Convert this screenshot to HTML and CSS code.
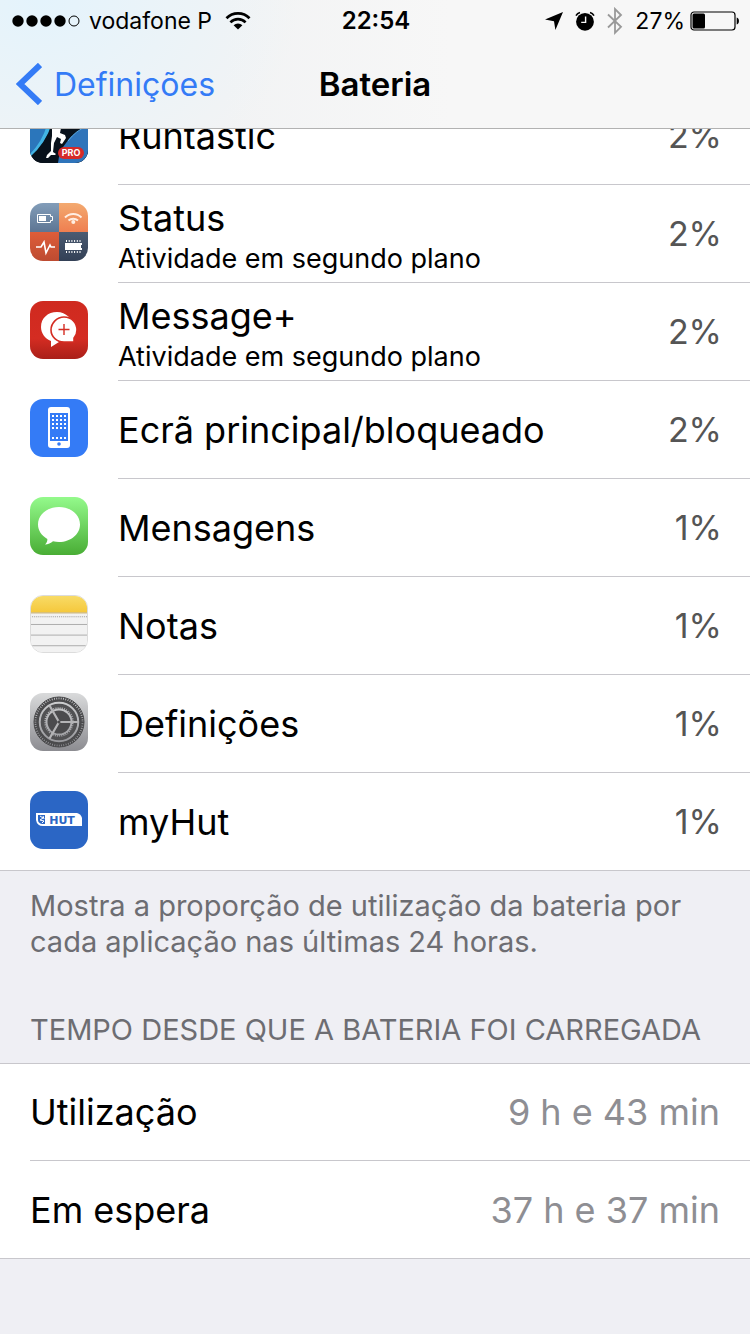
FILE: index.html
```html
<!DOCTYPE html>
<html lang="pt">
<head>
  <meta charset="UTF-8">
  <meta name="viewport" content="width=device-width, initial-scale=1.0">
  <title>Bateria</title>
  <link rel="stylesheet" href="styles.css">
</head>
<body>
  <header class="top">
    <div class="status-bar">
      <div class="status-left">
        <svg width="68" height="12" viewBox="0 0 68 12" aria-label="Rede">
          <circle cx="6" cy="6" r="5.7"/>
          <circle cx="20" cy="6" r="5.7"/>
          <circle cx="34" cy="6" r="5.7"/>
          <circle cx="48" cy="6" r="5.7"/>
          <circle cx="62" cy="6" r="5" fill="none" stroke="#000" stroke-width="1"/>
        </svg>
        <span>vodafone P</span>
        <svg width="26" height="18" viewBox="0 0 26 18" fill="none" stroke="#000" aria-label="Wi-Fi">
          <path d="M1.5 6.2a16.3 16.3 0 0 1 23 0" stroke-width="2.8"/>
          <path d="M5.4 10.3a10.8 10.8 0 0 1 15.2 0" stroke-width="2.6"/>
          <path d="M13 17.6l-4.4-4.3a6.2 6.2 0 0 1 8.8 0z" fill="#000" stroke="none"/>
        </svg>
      </div>
      <time class="clock">22:54</time>
      <div class="status-right">
        <svg width="18" height="18" viewBox="0 0 18 18" aria-label="Localização">
          <path d="M18 0L10.4 18 9 9.2 0 7.6z"/>
        </svg>
        <svg width="20" height="20" viewBox="0 0 20 20" aria-label="Alarme">
          <circle cx="10" cy="10.8" r="8.9"/>
          <path d="M1 4.6A7 7 0 0 1 5 1.4M19 4.6A7 7 0 0 0 15 1.4" fill="none" stroke="#000" stroke-width="1.6"/>
          <path d="M10.6 5.5v5.9H6.2" fill="none" stroke="#f7f7f7" stroke-width="1.4"/>
        </svg>
        <svg width="16" height="28" viewBox="0 0 16 28" aria-label="Bluetooth">
          <path d="M1 7.5l13 12.3-6 6V2l6 6L1 20.5" fill="none" stroke="#999" stroke-width="1.8"/>
        </svg>
        <span class="battery-level">27%</span>
        <svg width="50" height="20" viewBox="0 0 50 20" aria-label="Bateria">
          <rect x="1" y="1" width="44" height="18" rx="3" fill="none" stroke="#000" stroke-width="1.2"/>
          <rect x="2.5" y="2.5" width="12.5" height="15" rx="1.5"/>
          <path d="M46.7 6.5c3 .6 3 6.4 0 7z"/>
        </svg>
      </div>
    </div>
    <nav class="nav-bar">
      <a class="back" href="#">
        <svg width="26" height="42" viewBox="0 0 26 42" aria-hidden="true">
          <path d="M24 2L4 21l20 19" fill="none" stroke="#347bf6" stroke-width="6"/>
        </svg>
        Definições
      </a>
      <h1>Bateria</h1>
    </nav>
  </header>

  <main>
    <ul class="apps">
      <li>
        <svg class="app-icon" viewBox="0 0 58 58" aria-hidden="true">
          <rect width="58" height="58" fill="#08111b"/>
          <path d="M0 0h35Q21 36 0 51z" fill="#2b76bb"/>
          <path d="M17 20h5Q14 40 2 52l-2-3Q12 37 17 20z" fill="#42b4e4"/>
          <path d="M22 18h36v40H0v-6Q16 38 22 18z" fill="#08111b"/>
          <path d="M58 21Q43 27 36 38q-7 8-8 20h30z" fill="#2f74ba"/>
          <path d="M58 21Q46 25 38 36" fill="none" stroke="#5aa9e0"/>
          <path d="M22 18h10l-2 10 5 2 1 3-4 6-2-1 1-4-4-2-3 6-1 9 3 2-1 1-4 0-3 3h-2l1-3 4-4v-8l1-7z" fill="#fff"/>
          <rect x="28" y="42" width="26" height="12" rx="6" fill="#d52a29"/>
          <text x="41" y="51" text-anchor="middle" class="pro">PRO</text>
        </svg>
        <div class="row">
          <div class="name">Runtastic</div>
          <span class="percent">2%</span>
        </div>
      </li>
      <li>
        <svg class="app-icon" viewBox="0 0 58 58" aria-hidden="true">
          <defs>
            <linearGradient id="st1" x2="0" y2="1"><stop stop-color="#829db9"/><stop offset="1" stop-color="#5d7593"/></linearGradient>
            <linearGradient id="st2" x2="0" y2="1"><stop stop-color="#f3aa70"/><stop offset="1" stop-color="#ef7e50"/></linearGradient>
            <linearGradient id="st3" x2="0" y2="1"><stop stop-color="#df5d39"/><stop offset="1" stop-color="#bd4b31"/></linearGradient>
            <linearGradient id="st4" x2="0" y2="1"><stop stop-color="#4b5b72"/><stop offset="1" stop-color="#334056"/></linearGradient>
          </defs>
          <rect width="29" height="29" fill="url(#st1)"/>
          <rect x="29" width="29" height="29" fill="url(#st2)"/>
          <rect y="29" width="29" height="29" fill="url(#st3)"/>
          <rect x="29" y="29" width="29" height="29" fill="url(#st4)"/>
          <path d="M7.5 11.5h13v2h2v4h-2v2h-13z" fill="none" stroke="#fff"/>
          <path d="M9 13h7v5H9z" fill="#fff"/>
          <path d="M35 14.5a11.5 11.5 0 0 1 16.5 0M38.5 17.5a7 7 0 0 1 9.5 0" fill="none" stroke="#ffeee2" stroke-width="2"/>
          <circle cx="43.3" cy="19" r="2" fill="#ffeee2"/>
          <path d="M6 44h5l3-5 2 11 4-8 1 2h4" fill="none" stroke="#fff" stroke-width="1.6"/>
          <path d="M35 40h17v2h-1v3h1v2H35z" fill="#fff"/>
          <path d="M36 38h16M36 49h16" stroke="#fff" stroke-width="2" stroke-dasharray="1 1.7"/>
        </svg>
        <div class="row">
          <div class="name with-detail">Status<small>Atividade em segundo plano</small></div>
          <span class="percent">2%</span>
        </div>
      </li>
      <li>
        <svg class="app-icon" viewBox="0 0 58 58" aria-hidden="true">
          <defs>
            <linearGradient id="msgPlus" x2="0" y2="1"><stop stop-color="#cf2a1f"/><stop offset=".65" stop-color="#d42c22"/><stop offset="1" stop-color="#a91f18"/></linearGradient>
          </defs>
          <rect width="58" height="58" fill="url(#msgPlus)"/>
          <path d="M27 11c9 0 16 7 16 15s-7 15-14 15l-8 5v-6c-6-2-10-8-10-14 0-9 7-15 16-15z" fill="#fff"/>
          <path d="M34 16c8 0 13 6 13 13 0 3-1 6-3 8v4H34c-7 0-13-5-13-12s6-13 13-13z" fill="#fff" stroke="#d42c22" stroke-width="1.6"/>
          <path d="M28.5 28.5h11M34 23v11" stroke="#d42c22" stroke-width="1.4"/>
        </svg>
        <div class="row">
          <div class="name with-detail">Message+<small>Atividade em segundo plano</small></div>
          <span class="percent">2%</span>
        </div>
      </li>
      <li>
        <svg class="app-icon" viewBox="0 0 58 58" aria-hidden="true">
          <rect width="58" height="58" fill="#347bf6"/>
          <rect x="18" y="8" width="22" height="41" rx="3" fill="#fff"/>
          <rect x="20" y="14" width="18" height="28" fill="#347bf6"/>
          <path d="M22 17h15M22 21h15M22 25h15M22 29h15M22 39h15" stroke="#fff" stroke-width="2" stroke-dasharray="2"/>
          <circle cx="29" cy="45" r="1.8" fill="#347bf6"/>
        </svg>
        <div class="row">
          <div class="name">Ecrã principal/bloqueado</div>
          <span class="percent">2%</span>
        </div>
      </li>
      <li>
        <svg class="app-icon" viewBox="0 0 58 58" aria-hidden="true">
          <defs>
            <linearGradient id="msg" x2="0" y2="1"><stop stop-color="#94fa8c"/><stop offset="1" stop-color="#49ad35"/></linearGradient>
          </defs>
          <rect width="58" height="58" fill="url(#msg)"/>
          <path d="M29 10c12 0 21 8 21 17.5S41 45 29 45c-2 0-4-.2-6-.7-2 2-5 3.2-8 3.2 1.7-1.5 2.6-3.4 2.3-5.500C11.500 38.500 8 33.500 8 27.500 8 18 17 10 29 10z" fill="#fff"/>
        </svg>
        <div class="row">
          <div class="name">Mensagens</div>
          <span class="percent">1%</span>
        </div>
      </li>
      <li>
        <svg class="app-icon outlined" viewBox="0 0 58 58" aria-hidden="true">
          <defs>
            <linearGradient id="notes" x2="0" y2="1"><stop stop-color="#f8db66"/><stop offset="1" stop-color="#f5c83c"/></linearGradient>
          </defs>
          <rect width="58" height="58" fill="#f2f2f2"/>
          <rect width="58" height="17" fill="url(#notes)"/>
          <path d="M0 17.5h58" stroke="#c4a85a"/>
          <path d="M1 21.5h57" stroke="#999" stroke-dasharray="1"/>
          <path d="M0 29.5h58M0 40.5h58M0 51.5h58" stroke="#aaa"/>
        </svg>
        <div class="row">
          <div class="name">Notas</div>
          <span class="percent">1%</span>
        </div>
      </li>
      <li>
        <svg class="app-icon" viewBox="0 0 58 58" aria-hidden="true">
          <defs>
            <linearGradient id="gear" x2="0" y2="1"><stop stop-color="#d9dadb"/><stop offset="1" stop-color="#8c8c91"/></linearGradient>
          </defs>
          <rect width="58" height="58" fill="url(#gear)"/>
          <circle cx="29" cy="29" r="23.5" fill="none" stroke="#48484a" stroke-width="3" stroke-dasharray="1.5 .8"/>
          <circle cx="29" cy="29" r="21.5" fill="none" stroke="#4b4b4d" stroke-width="2.5"/>
          <circle cx="29" cy="29" r="25" fill="none" stroke="#4b4b4d" stroke-width="1"/>
          <circle cx="29" cy="29" r="16.5" fill="none" stroke="#515153" stroke-width="3.6"/>
          <circle cx="29" cy="29" r="14.2" fill="none" stroke="#515153" stroke-width="1.6" stroke-dasharray="1.2 1"/>
          <circle cx="29" cy="29" r="11.5" fill="#4b4b4d"/>
          <path d="M29 29h19M29 29L19.5 12.500M29 29l-9.500 16.500" stroke="#b4b4b6" stroke-width="2.2"/>
          <circle cx="29" cy="29" r="1.5" fill="#4b4b4d"/>
        </svg>
        <div class="row">
          <div class="name">Definições</div>
          <span class="percent">1%</span>
        </div>
      </li>
      <li>
        <svg class="app-icon" viewBox="0 0 58 58" aria-hidden="true">
          <rect width="58" height="58" fill="#2b66c5"/>
          <path d="M6 22h41q4 1 5 5v8H13q-6 0-7-6z" fill="#fff"/>
          <path d="M8 24h7v9h-3q-4-1-4-4z" fill="#2b66c5"/>
          <path d="M10 25l3 2-3 2 4 1-2 2M13 25l1 3" fill="none" stroke="#fff"/>
          <text x="32" y="33" text-anchor="middle" class="hut">HUT</text>
        </svg>
        <div class="row">
          <div class="name">myHut</div>
          <span class="percent">1%</span>
        </div>
      </li>
    </ul>

    <p class="note">Mostra a proporção de utilização da bateria por cada aplicação nas últimas 24 horas.</p>

    <h2>Tempo desde que a bateria foi carregada</h2>
    <dl class="times">
      <div class="row">
        <dt>Utilização</dt>
        <dd>9 h e 43 min</dd>
      </div>
      <div class="row">
        <dt>Em espera</dt>
        <dd>37 h e 37 min</dd>
      </div>
    </dl>
  </main>
</body>
</html>
```

FILE: styles.css
```css
* {
  box-sizing: border-box;
}
body {
  margin: 0;
  background: #efeff4;
  color: #000;
  font-family: Inter, "Liberation Sans", sans-serif;
  font-size: 36px;
}
svg {
  display: block;
  flex-shrink: 0;
}

/* status bar + navigation */
.top {
  position: sticky;
  top: 0;
  z-index: 1;
  border-bottom: 1px solid #b2b2b2;
  background: radial-gradient(ellipse 260px 200px at 40px 0, #e4f3fc, rgba(241, 243, 245, 0)),
    linear-gradient(90deg, #f2f3f4 30%, #f7f7f7 60%);
}
.status-bar {
  display: grid;
  grid-template-columns: 1fr auto 1fr;
  align-items: center;
  height: 40px;
  padding: 1px 10px 0 12px;
  font-size: 23px;
}
.status-left,
.status-right {
  display: flex;
  align-items: center;
}
.status-left {
  gap: 9px;
}
.status-left span {
  margin-right: 4px;
}
.status-right {
  justify-content: flex-end;
  gap: 12px;
}
.status-right .battery-level {
  margin-right: -7px;
}
.clock {
  font-size: 24px;
  font-weight: 600;
}
.nav-bar {
  display: grid;
  grid-template-columns: 1fr auto 1fr;
  align-items: center;
  height: 88px;
  padding: 0 16px;
}
.back {
  display: flex;
  align-items: center;
  gap: 12px;
  color: #347bf6;
  font-size: 32px;
  text-decoration: none;
}
h1 {
  margin: 0;
  font-size: 33px;
  font-weight: 600;
}

/* first row is scrolled partly under the bar */
main {
  margin-top: -42px;
}
ul,
dl,
dd {
  margin: 0;
  padding: 0;
  list-style: none;
}
.apps,
.times {
  background: #fff;
  border-bottom: 1px solid #c8c7cc;
}
.apps li {
  display: flex;
  gap: 30px;
  padding-left: 30px;
}
.app-icon {
  width: 58px;
  height: 58px;
  margin-top: 18px;
  border-radius: 13px;
}
.outlined {
  border: 1px solid #dcdcdc;
}
.row {
  display: flex;
  flex: 1;
  align-items: center;
  justify-content: space-between;
  height: 98px;
  padding-right: 30px;
  border-bottom: 1px solid #c8c7cc;
}
.apps .row {
  padding-right: 28px;
}
.apps li:last-child .row,
.times .row:last-child {
  height: 97px;
  border-bottom: 0;
}
.times .row:first-child {
  height: 97px;
}
small {
  display: block;
  font-size: 27px;
  line-height: 36px;
}
.name {
  line-height: 46px;
}
.with-detail {
  padding-top: 4px;
}
.percent {
  color: #555;
  font-size: 34px;
}
.note {
  margin: 0;
  padding: 17px 30px 0;
  color: #6d6d72;
  font-size: 29px;
  line-height: 36px;
}
h2 {
  margin: 0;
  padding: 52px 30px 15px;
  color: #6d6d72;
  font-size: 29px;
  font-weight: 400;
  line-height: 36px;
  text-transform: uppercase;
}
.times {
  padding-left: 30px;
  border-top: 1px solid #c8c7cc;
}
dd {
  color: #8e8e93;
}
.pro {
  fill: #fff;
  font-size: 9px;
  font-weight: 700;
}
.hut {
  fill: #2b66c5;
  font-family: "DejaVu Sans", sans-serif;
  font-size: 11px;
  font-weight: 700;
}
```
